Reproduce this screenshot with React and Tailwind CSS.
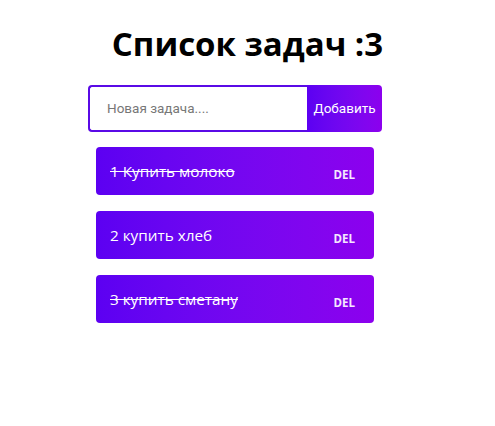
export default function App() {
  const items = [
    { t: "1 Купить молоко", done: true },
    { t: "2 купить хлеб", done: false },
    { t: "3 купить сметану", done: true },
  ];
  return (
    <div className="w-[495px] h-[426px] bg-white font-['Open_Sans',sans-serif]">
      <h1 className="pt-[24px] text-center text-[33px] leading-[40px] font-bold text-black">
        Список задач :3
      </h1>
      <div className="mt-[21px] ml-[88px] w-[294px] h-[47px] flex">
        <div className="flex-1 border-2 border-r-0 border-[#5a0ae6] rounded-l-[4px] flex items-center pl-[17px]">
          <span className="font-['Roboto',sans-serif] text-[13.5px] text-[#777]">Новая задача....</span>
        </div>
        <div className="w-[75px] rounded-r-[4px] bg-gradient-to-r from-[#5c00f2] to-[#8c00ee] flex items-center justify-center">
          <span className="font-['Roboto',sans-serif] text-[13.5px] text-white">Добавить</span>
        </div>
      </div>
      <div className="mt-[15px] ml-[96px] w-[278px] flex flex-col gap-[16px]">
        {items.map((it, i) => (
          <div
            key={i}
            className="h-[48px] rounded-[4px] bg-gradient-to-r from-[#5c00f2] to-[#8c00ee] flex items-center justify-between pl-[14px] pr-[19px]"
          >
            <span className={"text-[15.3px] text-white " + (it.done ? "line-through" : "")}>{it.t}</span>
            <span className="pt-[8px] text-[11.5px] font-bold text-[#f5e8ff]">DEL</span>
          </div>
        ))}
      </div>
    </div>
  );
}
